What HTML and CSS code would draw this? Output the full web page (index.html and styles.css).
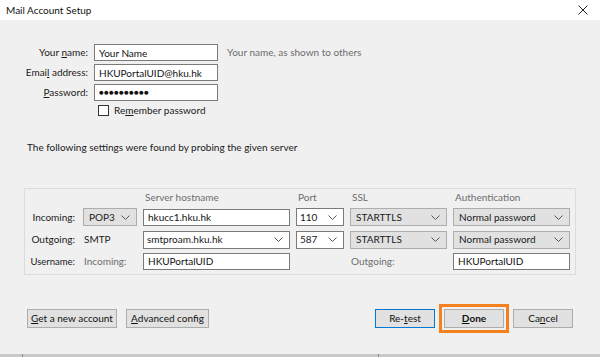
FILE: index.html
```html
<!doctype html>
<html lang="en">
<head>
  <meta charset="utf-8" />
  <title>Mail Account Setup</title>
  <link rel="stylesheet" href="styles.css">
</head>
<body>
  <div class="window">
    <div class="titlebar">
      <span class="title">Mail Account Setup</span>
      <svg class="close" width="10" height="10" viewBox="0 0 10 10"><path d="M0.5 0.5L9.5 9.5M9.5 0.5L0.5 9.5" stroke="#222" stroke-width="1"/></svg>
    </div>

    <div class="dialog">
      <!-- account identity -->
      <div class="account">
        <label for="name">Your <u>n</u>ame:</label>
        <input id="name" class="field" type="text" value="Your Name" />
        <span class="hint">Your name, as shown to others</span>

        <label for="email">Emai<u>l</u> address:</label>
        <input id="email" class="field" type="text" value="HKUPortalUID@hku.hk" />
        <span></span>

        <label for="pass"><u>P</u>assword:</label>
        <div id="pass" class="field dots">●●●●●●●●●●</div>
        <span></span>

        <span></span>
        <div class="remember"><span class="box"></span><span>Re<u>m</u>ember password</span></div>
        <span></span>
      </div>

      <p class="probe">The following settings were found by probing the given server</p>

      <!-- server settings -->
      <div class="group">
        <span></span><span></span>
        <span class="head">Server hostname</span>
        <span class="head">Port</span>
        <span class="head">SSL</span>
        <span class="head">Authentication</span>

        <span class="lbl">Incoming:</span>
        <div class="combo">POP3<svg width="9" height="5" viewBox="0 0 9 5"><path d="M0.5 0.5L4.5 4.5L8.5 0.5" fill="none" stroke="#555"/></svg></div>
        <input class="field" type="text" value="hkucc1.hku.hk" />
        <div class="combo edit">110<svg width="9" height="5" viewBox="0 0 9 5"><path d="M0.5 0.5L4.5 4.5L8.5 0.5" fill="none" stroke="#555"/></svg></div>
        <div class="combo">STARTTLS<svg width="9" height="5" viewBox="0 0 9 5"><path d="M0.5 0.5L4.5 4.5L8.5 0.5" fill="none" stroke="#555"/></svg></div>
        <div class="combo">Normal password<svg width="9" height="5" viewBox="0 0 9 5"><path d="M0.5 0.5L4.5 4.5L8.5 0.5" fill="none" stroke="#555"/></svg></div>

        <span class="lbl">Outgoing:</span>
        <span class="plain">SMTP</span>
        <div class="combo edit">smtproam.hku.hk<svg width="9" height="5" viewBox="0 0 9 5"><path d="M0.5 0.5L4.5 4.5L8.5 0.5" fill="none" stroke="#555"/></svg></div>
        <div class="combo edit">587<svg width="9" height="5" viewBox="0 0 9 5"><path d="M0.5 0.5L4.5 4.5L8.5 0.5" fill="none" stroke="#555"/></svg></div>
        <div class="combo">STARTTLS<svg width="9" height="5" viewBox="0 0 9 5"><path d="M0.5 0.5L4.5 4.5L8.5 0.5" fill="none" stroke="#555"/></svg></div>
        <div class="combo">Normal password<svg width="9" height="5" viewBox="0 0 9 5"><path d="M0.5 0.5L4.5 4.5L8.5 0.5" fill="none" stroke="#555"/></svg></div>

        <span class="lbl user">Username:</span>
        <span class="plain muted">Incoming:</span>
        <input class="field short" type="text" value="HKUPortalUID" />
        <span></span>
        <span class="plain muted">Outgoing:</span>
        <input class="field short" type="text" value="HKUPortalUID" />
      </div>

      <div class="buttons">
        <button type="button" class="new"><u>G</u>et a new account</button>
        <button type="button" class="adv"><u>A</u>dvanced config</button>
        <span class="spacer"></span>
        <button type="button" class="focus">Re-<u>t</u>est</button>
        <button type="button" class="done"><u>D</u>one</button>
        <button type="button">Ca<u>n</u>cel</button>
      </div>
    </div>

    <div class="taskbar"><span class="seg a"></span><span class="seg b"></span><span class="seg c"></span></div>
  </div>
</body>
</html>
```

FILE: styles.css
```css
:root{--bg:#f0f0f0;--muted:#6d6d6d;--line:#7a7a7a;--btn:#e1e1e1;--btnline:#adadad}
body{margin:0;font-family:Lato,"Noto Sans",system-ui,sans-serif;font-size:10px;line-height:13px;color:#1a1a1a}
.window{width:600px;height:357px;overflow:hidden;display:flex;flex-direction:column;background:var(--bg)}
u{text-decoration:underline;text-underline-offset:1px}

.titlebar{height:20px;background:#fff;display:flex;align-items:center;justify-content:space-between;padding:0 12px 0 6px;flex:none}
.title{font-size:10px;color:#111}

.dialog{flex:1;display:flex;flex-direction:column}

.account{display:grid;grid-template-columns:88px 124px 1fr;column-gap:6px;row-gap:3px;margin-top:24px;align-items:center}
.account label{text-align:right}
.hint{color:var(--muted);padding-left:3px}
.field{box-sizing:border-box;height:17px;border:1px solid var(--line);background:#fff;font:inherit;color:#111;padding:0 4px;margin:0;width:100%;outline:none}
.dots{font-size:8px;letter-spacing:0.2px;line-height:15px}
.remember{display:flex;align-items:center;gap:5px;padding-left:4px}
.box{width:9px;height:9px;border:1px solid #333;background:#fff}

.probe{margin:24px 0 0 27px}

.group{margin:34px 24px 0 24px;border:1px solid #dcdcdc;display:grid;grid-template-columns:47px 54px 147px 48px 97px 117px;column-gap:6px;padding:1px 5px 5px 5px;grid-template-rows:14px 18px 18px 17px;row-gap:4px;align-items:center}
.group > :nth-child(n+13){margin-top:1px}
.head{color:var(--muted);padding-left:2px}
.lbl{text-align:right;padding-right:2px}
.lbl.user{font-size:9.5px}
.plain{padding-left:1px}
.muted{color:var(--muted)}
.group .field{height:17px}
.combo{box-sizing:border-box;height:18px;border:1px solid var(--btnline);background:var(--btn);display:flex;align-items:center;justify-content:space-between;padding:0 6px 0 5px}
.combo.edit{background:#fff;border-color:var(--line);padding-left:3px}

.buttons{display:flex;gap:9px;margin:34px 27px 0 27px;align-items:center}
.spacer{flex:1}
button{box-sizing:border-box;height:19px;background:var(--btn);border:1px solid var(--btnline);font:inherit;color:#111;padding:0;width:60px}
button.new{width:90px}
button.adv{width:83px}
.focus{border-color:#0078d7}
.done{font-weight:bold;outline:3px solid #f5801e;outline-offset:2px}

.taskbar{margin-top:auto;height:3px;display:flex;background:#c9c9c9}
.seg{height:100%}
.seg.a{width:22px;border-right:1px solid #8a8a8a}
.seg.b{width:355px;border-right:1px solid #8a8a8a}
```
